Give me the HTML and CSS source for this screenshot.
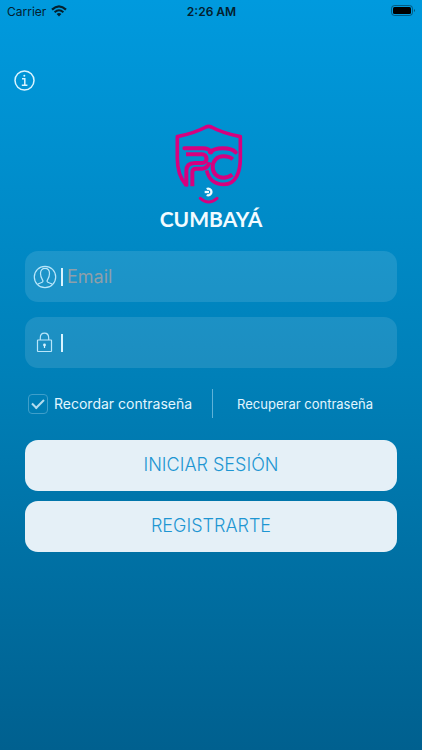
FILE: index.html
```
<!DOCTYPE html>
<html lang="es">
<head>
  <meta charset="UTF-8">
  <meta name="viewport" content="width=device-width, initial-scale=1.0">
  <title>Cumbayá</title>
  <link rel="stylesheet" href="styles.css">
</head>
<body>

  <header class="status-bar">
    <div class="carrier">
      <span>Carrier</span>
      <svg width="16" height="12" viewBox="0 0 16 12">
        <path d="M1 4.6 Q8 -2 15 4.6" fill="none" stroke="#04202e" stroke-width="2.2"/>
        <path d="M3.6 7.2 Q8 3.2 12.4 7.2" fill="none" stroke="#04202e" stroke-width="2"/>
        <path d="M5.6 9 Q8 7 10.4 9 L8 11.4 Z" fill="#04202e"/>
      </svg>
    </div>
    <div class="time">2:26 AM</div>
    <div class="battery">
      <svg width="25" height="12" viewBox="0 0 25 12">
        <rect x="0.5" y="0.5" width="21" height="10" rx="3" fill="none" stroke="#04202e" stroke-opacity="0.5"/>
        <rect x="2" y="2" width="18" height="7" rx="1.5" fill="#000"/>
        <path d="M23 4 Q25 5.5 23 7 Z" fill="#04202e" fill-opacity="0.6"/>
      </svg>
    </div>
  </header>

  <main>
    <button type="button" class="info-btn" aria-label="Información">
      <svg width="21" height="21" viewBox="0 0 21 21" fill="none" stroke="#d9f4ff" stroke-width="1.5">
        <circle cx="10.5" cy="10.5" r="9.5"/>
        <path d="M8 8.8 H10.8 V15 M7.8 15.2 H13.4"/>
        <circle cx="10.3" cy="5.8" r="1" fill="#d9f4ff" stroke="none"/>
      </svg>
    </button>

    <div class="logo">
      <svg width="74" height="82" viewBox="72 24 222 246" fill="none" stroke="#d6007f" stroke-width="12">
        <!-- shield -->
        <path d="M114 209 H107 C89 188 82 165 82 130 V65 C115 58 148 47 168 36 Q176 32 184 36 C204 47 237 58 271 65 V130 C271 170 258 208 222 208 C192 208 176 192 170 166" stroke-width="11" stroke-linejoin="round"/>
        <!-- P -->
        <path d="M103 100 H158 C172 100 180 105 184 112" stroke-linecap="round"/>
        <path d="M108 118 H156 C174 118 174 144 156 144 H134 C116 144 109 152 109 168 V214"/>
        <path d="M127 214 V172 C127 164 131 161 138 161 H156 C168 161 175 154 178 142"/>
        <!-- C -->
        <path d="M180 112 C190 102 203 100 218 100 C236 100 248 102 257 112" stroke-linecap="round"/>
        <path d="M248 133 C240 125 232 124 220 124 C201 124 188 138 188 156 C188 174 201 188 220 188 C232 188 239 185 247 179"/>
        <!-- smile -->
        <path d="M151 250 Q176 272 201 250" stroke-width="9" stroke-linecap="round"/>
        <!-- ball -->
        <path d="M170 222 A10 10 0 1 1 170 240" stroke="#effbff" stroke-width="7"/>
        <path d="M164 231 H177" stroke="#effbff" stroke-width="7"/>
      </svg>
      <h1>CUMBAYÁ</h1>
    </div>

    <form>
      <div class="field">
        <svg width="24" height="24" viewBox="0 0 24 24" fill="none" stroke="#b9e6fa" stroke-width="1.2">
          <circle cx="12" cy="12" r="10.7"/>
          <path d="M4.5 19.5 C6 18 10 17.7 10 16.3 C10 14.8 7.5 13 7.5 8.5 C7.5 5 9.5 3.3 12 3.3 C14.5 3.3 16.5 5 16.5 8.5 C16.5 13 14 14.8 14 16.3 C14 17.7 18 18 19.5 19.5"/>
        </svg>
        <span class="bar"></span>
        <input type="email" name="email" placeholder="Email" aria-label="Email">
      </div>

      <div class="field">
        <svg width="24" height="24" viewBox="0 0 24 24" fill="none" stroke="#b9e6fa" stroke-width="1.2">
          <rect x="4.5" y="9" width="14" height="11.5" rx="0.5"/>
          <path d="M7.3 9 V7 C7.3 0.6 15.7 0.6 15.7 7 V9"/>
          <circle cx="11.5" cy="14" r="1.4" fill="#d9f4ff" stroke="none"/>
          <path d="M11.5 14 V17" stroke="#d9f4ff"/>
        </svg>
        <span class="bar"></span>
        <input type="password" name="password" aria-label="Contraseña">
      </div>

      <div class="options">
        <label class="remember">
          <input type="checkbox" name="remember" checked>
          <span>Recordar contraseña</span>
        </label>
        <a href="#" class="recover">Recuperar contraseña</a>
      </div>

      <button type="submit" class="btn">INICIAR SESIÓN</button>
      <button type="button" class="btn">REGISTRARTE</button>
    </form>
  </main>

</body>
</html>
```
FILE: styles.css
```
* {
  box-sizing: border-box;
}
body {
  margin: 0;
  min-height: 100vh;
  font-family: Inter, 'Liberation Sans', sans-serif;
  color: #e2f6ff;
  background: linear-gradient(#009ade, #0080b8 50%, #00608f);
}
.status-bar {
  display: grid;
  grid-template-columns: 1fr auto 1fr;
  align-items: center;
  height: 22px;
  padding: 0 6px 0 7px;
  font-size: 12px;
  color: #04202e;
}
.status-bar svg {
  display: block;
}
.carrier {
  display: flex;
  align-items: center;
  gap: 5px;
}
.time {
  font-weight: 600;
}
.battery {
  justify-self: end;
}
.info-btn {
  display: block;
  margin: 48px 0 0 14px;
  padding: 0;
  border: none;
  background: none;
  cursor: pointer;
}
.info-btn svg {
  display: block;
}
.logo {
  margin-top: 32px;
  text-align: center;
}
.logo svg {
  display: block;
  margin: 0 auto;
}
.logo h1 {
  margin: 2px 0 0;
  font-family: Lato, sans-serif;
  font-size: 21px;
  font-weight: 700;
  line-height: 24px;
  color: #f2fbff;
}
form {
  padding: 20px 25px;
}
.field {
  display: flex;
  align-items: center;
  height: 51px;
  margin-bottom: 15px;
  padding: 0 8px;
  border-radius: 13px;
  background-color: rgba(255, 255, 255, 0.11);
}
.bar {
  width: 2px;
  height: 18px;
  margin: 0 4px;
  background-color: #d9f4ff;
}
.field input {
  flex: 1;
  min-width: 0;
  padding: 0;
  border: none;
  outline: none;
  background: none;
  font-family: inherit;
  font-size: 18px;
  color: #fff;
}
.field input::placeholder {
  color: #8e9fa9;
  opacity: 1;
}
.options {
  display: flex;
  align-items: center;
  margin: 21px 0 22px;
}
.remember {
  display: flex;
  align-items: center;
  flex: none;
  height: 29px;
  padding: 0 20px 0 3px;
  font-size: 14px;
  border-right: 1px solid #5fb2d8;
  cursor: pointer;
}
.remember input {
  appearance: none;
  display: grid;
  place-items: center;
  width: 20px;
  height: 20px;
  margin: 0 6px 0 0;
  border: 1px solid #3f9fca;
  border-radius: 4px;
}
.remember input:checked::before {
  content: '';
  width: 10px;
  height: 5px;
  margin-bottom: 3px;
  border: solid #b4dcee;
  border-width: 0 0 2px 2px;
  transform: rotate(-45deg);
}
.recover {
  flex: 1;
  text-align: center;
  font-size: 13px;
  color: #e2f6ff;
  text-decoration: none;
}
.btn {
  display: block;
  width: 100%;
  height: 51px;
  margin-bottom: 10px;
  padding: 0 0 2px;
  border: none;
  border-radius: 13px;
  background-color: #e5f0f7;
  font-family: inherit;
  font-size: 18px;
  font-weight: 300;
  color: #1e96d2;
  cursor: pointer;
}
```
